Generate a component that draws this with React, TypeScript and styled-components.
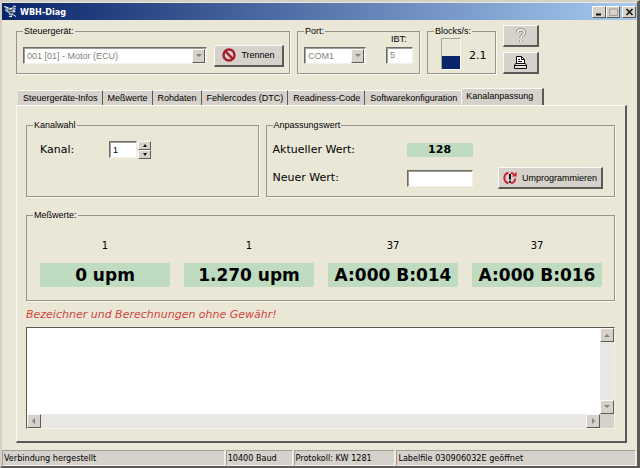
import React from "react";
import styled, { createGlobalStyle } from "styled-components";

const ui = `"Liberation Sans", Arial, sans-serif`;
const wide = `"DejaVu Sans", Verdana, sans-serif`;
const condensed = `"DejaVu Sans Condensed", "DejaVu Sans", sans-serif`;

const Global = createGlobalStyle`
  * { box-sizing: border-box; }
  html, body, #root { height: 100%; }
  body { margin: 0; font: 9px/14px ${ui}; color: #000; background: #ebe7d7; }
  button, input, select, textarea { font: inherit; color: inherit; margin: 0; border-radius: 0; }
  fieldset { min-width: 0; margin: 0; }
`;

const Frame = styled.div`
  min-height: 100%;
  display: flex;
  flex-direction: column;
  background: #ebe7d7;
  border: 2px solid;
  border-color: #d4d0c8 #5c5a56 #5c5a56 #d4d0c8;
  border-right-width: 3px;
`;

const TitleBar = styled.header`
  display: flex;
  align-items: center;
  gap: 3px;
  height: 17px;
  margin-top: 1px;
  padding: 0 1px 0 2px;
  background: linear-gradient(90deg, #0a246a, #a6caf0);
`;

const Title = styled.h1`
  flex: 1;
  margin: 0;
  font: bold 9px/14px ${condensed};
  color: #fff;
`;

const WindowButtons = styled.div`
  display: flex;
`;

const raised = `
  background: #d6d1ca;
  border: 1px solid;
  border-color: #fbfaf6 #5c5a56 #5c5a56 #fbfaf6;
`;

const CaptionButton = styled.button<{ $apart?: boolean }>`
  ${raised}
  width: 14px;
  height: 12px;
  margin-left: ${(p) => (p.$apart ? 2 : 0)}px;
  padding: 0;
  display: grid;
  place-items: center;
`;

const Content = styled.main`
  flex: 1;
  display: flex;
  flex-direction: column;
  padding: 4px 10px 7px 14px;
`;

const TopRow = styled.div`
  display: grid;
  grid-template-columns: minmax(0, 274fr) minmax(0, 123fr) minmax(0, 69fr) 36px;
  align-items: end;
  gap: 7px;
  padding-right: 88px;
`;

const Group = styled.fieldset`
  padding: 0 5px 0 6px;
  border: 1px solid #96948c;
  box-shadow: 1px 1px 0 #faf8ef;
`;

const Legend = styled.legend`
  padding: 0 1px;
`;

const Line = styled.div<{ $gap?: number; $height: number; $indent?: number; $top?: boolean }>`
  display: flex;
  align-items: ${(p) => (p.$top ? "flex-start" : "center")};
  gap: ${(p) => p.$gap ?? 0}px;
  height: ${(p) => p.$height}px;
  padding-left: ${(p) => p.$indent ?? 0}px;
`;

const sunken = `
  background: #fff;
  border: 1px solid;
  border-color: #6e6c68 #f4f2e8 #f4f2e8 #6e6c68;
  box-shadow: inset 1px 1px 0 #a09e98;
`;

const SelectFrame = styled.div<{ $grow?: boolean }>`
  ${sunken}
  display: flex;
  align-items: center;
  height: 17px;
  padding: 1px;
  flex: ${(p) => (p.$grow ? "1" : "none")};
  width: ${(p) => (p.$grow ? "auto" : "62px")};
`;

const Select = styled.select`
  appearance: none;
  flex: 1;
  min-width: 0;
  border: 0;
  padding: 0 2px;
  background: transparent;
  &:disabled { color: #85837e; opacity: 1; }
`;

const Arrow = styled.span`
  ${raised}
  display: grid;
  place-items: center;
  width: 13px;
  height: 14px;
`;

const PushButton = styled.button<{ $end?: boolean }>`
  ${raised}
  border-right-width: 2px;
  border-bottom-width: 2px;
  display: flex;
  align-items: center;
  justify-content: center;
  gap: 5px;
  height: 22px;
  min-width: 70px;
  padding: 0 4px;
  margin-left: ${(p) => (p.$end ? "auto" : "0")};
  margin-right: ${(p) => (p.$end ? "6px" : "0")};
  white-space: nowrap;
`;

const SideButtons = styled.div`
  display: flex;
  flex-direction: column;
  gap: 5px;
`;

const ToolButton = styled(PushButton)`
  min-width: 0;
  padding: 0;
`;

const TextBox = styled.input<{ $w: number }>`
  ${sunken}
  width: ${(p) => p.$w}px;
  height: 17px;
  padding: 0 3px;
  &:disabled { color: #85837e; }
`;

const Stack = styled.label`
  display: flex;
  flex-direction: column;
  gap: 3px;
  margin-bottom: 14px;
  line-height: 10px;
`;

const StackText = styled.span`
  padding-left: 5px;
`;

const Meter = styled.div`
  display: flex;
  align-items: flex-end;
  width: 20px;
  height: 32px;
  border: 1px solid;
  border-color: #a8a69c #faf8ef #faf8ef #a8a69c;
`;

const MeterFill = styled.div`
  width: 100%;
  background: #0a246a;
`;

const Reading = styled.span`
  align-self: center;
  font: 11px/14px ${wide};
`;

const Tabs = styled.div`
  display: flex;
  align-items: flex-end;
  height: 17px;
  margin-top: 14px;
  padding-left: 2px;
`;

const Tab = styled.button`
  height: 15px;
  padding: 0 4px 0 5px;
  background: #d6d1ca;
  border: 0 solid #5c5a56;
  border-top: 1px solid #fbfaf6;
  border-right: 1px solid #5c5a56;
  white-space: nowrap;
  &:nth-last-child(2) { border-right-color: #fbfaf6; }
  &[aria-selected="true"] {
    height: 17px;
    padding: 0 9px 2px 4px;
    border-right-width: 2px;
  }
`;

const Panel = styled.section`
  flex: 1;
  display: flex;
  flex-direction: column;
  border: 1px solid;
  border-color: #fbfaf6 #5c5a56 #5c5a56 #fbfaf6;
  border-right-width: 2px;
  border-bottom-width: 2px;
  padding: 12px 10px 12px 9px;
`;

const Row = styled.div`
  display: grid;
  grid-template-columns: minmax(0, 233fr) minmax(0, 350fr);
  gap: 7px;
  margin-bottom: 11px;
`;

const FieldLabel = styled.label<{ $w: number }>`
  width: ${(p) => p.$w}px;
  font: 11px/14px ${wide};
`;

const Spinner = styled.div`
  display: flex;
  flex-direction: column;
  margin-left: 1px;
`;

const SpinButton = styled.button`
  ${raised}
  width: 13px;
  height: 9px;
  padding: 0;
  display: grid;
  place-items: center;
`;

const CurrentValue = styled.output`
  width: 66px;
  background: #c0dcc0;
  text-align: center;
  font: bold 11px/14px ${wide};
`;

const Readings = styled.div`
  display: grid;
  grid-template-columns: repeat(4, 1fr);
  gap: 14px;
  padding: 17px 7px 13px;
`;

const Cell = styled.div`
  display: flex;
  flex-direction: column;
  gap: 10px;
  text-align: center;
  font: 10px/14px ${wide};
`;

const Value = styled.output`
  background: #c0dcc0;
  font: bold 17px/24px ${wide};
  white-space: nowrap;
`;

const Notice = styled.p`
  margin: 7px 0 5px;
  font: italic 11px/14px ${wide};
  color: #d0453c;
`;

const LogFrame = styled.div`
  flex: 1;
  display: grid;
  grid-template: 1fr 14px / 1fr 14px;
  min-height: 60px;
  border: 1px solid;
  border-color: #5c5a56 #f4f2e8 #f4f2e8 #5c5a56;
  background: #d6d1ca;
`;

const Log = styled.textarea`
  resize: none;
  border: 0;
  padding: 2px;
  width: 100%;
  height: 100%;
  background: #fff;
  overflow: hidden;
  outline: none;
`;

const Scroll = styled.div<{ $vertical?: boolean }>`
  display: flex;
  flex-direction: ${(p) => (p.$vertical ? "column" : "row")};
  justify-content: space-between;
  background: #e9e7e4;
`;

const ScrollButton = styled.button`
  ${raised}
  width: 14px;
  height: 14px;
  padding: 0;
  display: grid;
  place-items: center;
`;

const StatusBar = styled.footer`
  display: grid;
  grid-template-columns: 223fr 67fr 102fr 240fr;
  gap: 1px;
  padding-right: 1px;
`;

const StatusPane = styled.span`
  padding-left: 1px;
  background: #d6d1ca;
  border: 1px solid;
  border-color: #a09e98 #f4f2e8 #f4f2e8 #a09e98;
  font: 9px/14px ${condensed};
  white-space: nowrap;
`;

const Triangle = ({ dir, color = "#85837e" }: { dir: "up" | "down" | "left" | "right"; color?: string }) => {
  const points = {
    up: "0,5 3,2 6,5",
    down: "0,1 6,1 3,4",
    left: "4,0 4,6 1,3",
    right: "2,0 5,3 2,6",
  }[dir];
  return (
    <svg width="6" height="6" viewBox="0 0 6 6" aria-hidden="true">
      <polygon points={points} fill={color} />
    </svg>
  );
};

const SpinMark = ({ up }: { up?: boolean }) => (
  <svg width="4" height="3" viewBox="0 0 4 3" aria-hidden="true">
    <polygon points={up ? "0,3 2,0 4,3" : "0,0 4,0 2,3"} fill="#111" />
  </svg>
);

const AppIcon = () => (
  <svg width="13" height="13" viewBox="0 0 13 13" aria-hidden="true">
    <path d="M1 2l3 0 2 1 3-1 3 1-1 3 1 1-3 1-1 3-3-1-1-3-2-2z" fill="#8fa3bd" />
    <path d="M0 1.500l4 1M9 1l3 .5M1 5l3 2M8 9l4 2.500M5 11.500h3" stroke="#e8eef4" fill="none" />
    <path d="M4 5l2 1 3-2M6 8l3-1" stroke="#26334f" fill="none" />
    <path d="M6 3.500h2M9 6h2" stroke="#fff" fill="none" />
  </svg>
);

const StopIcon = () => (
  <svg width="14" height="14" viewBox="0 0 14 14" aria-hidden="true">
    <circle cx="7" cy="7" r="5.500" fill="none" stroke="#a5202a" strokeWidth="2.400" />
    <path d="M3.200 3.200l7.600 7.600" stroke="#a5202a" strokeWidth="2.400" />
  </svg>
);

const ProgramIcon = () => (
  <svg width="14" height="14" viewBox="0 0 14 14" aria-hidden="true">
    <path
      d="M5.500 1.800A5.400 5.400 0 0 0 5.500 12.300M8 12.300A5.400 5.400 0 0 0 12.200 7.500M8 1.800a5.400 5.400 0 0 1 2.800 1.600"
      fill="none"
      stroke="#d0202c"
      strokeWidth="2"
    />
    <path d="M8.800 5.600h4.800V.8z" fill="#d0202c" />
    <path d="M7 3v5.500M7 9.800v2" stroke="#111" strokeWidth="2" />
  </svg>
);

const hook = "M2.500 5C2.500 .8 9.500 .8 9.500 4.500c0 2.500-3.500 2.700-3.500 5.500M6 12v2";

const HelpIcon = () => (
  <svg width="12" height="16" viewBox="0 0 12 16" aria-hidden="true">
    <path d={hook} fill="none" stroke="#85837e" strokeWidth="3.200" />
    <path d={hook} fill="none" stroke="#fbfaf6" strokeWidth="1.600" />
  </svg>
);

const PrintIcon = () => (
  <svg width="15" height="15" viewBox="0 0 15 15" aria-hidden="true">
    <path d="M3.500 8.500v-7h5l3 3v4" fill="#fff" stroke="#111" />
    <path d="M8.500 1.500v3h3M5 4.500h2M5 6.500h4" fill="none" stroke="#111" />
    <path d="M2.500 8.500h10l1 2v3h-12v-3z" fill="#e8e6e0" stroke="#111" />
    <path d="M1 10.500h13" stroke="#111" />
  </svg>
);

const tabs = [
  "Steuergeräte-Infos",
  "Meßwerte",
  "Rohdaten",
  "Fehlercodes (DTC)",
  "Readiness-Code",
  "Softwarekonfiguration",
  "Kanalanpassung",
];
const activeTab = "Kanalanpassung";

const readings = [
  { label: "1", value: "0 upm" },
  { label: "1", value: "1.270 upm" },
  { label: "37", value: "A:000 B:014" },
  { label: "37", value: "A:000 B:016" },
];

const status = ["Verbindung hergestellt", "10400 Baud", "Protokoll: KW 1281", "Labelfile 030906032E geöffnet"];

const blockRate = 2.1;
const maxBlockRate = 5;

export default function App() {
  return (
    <>
      <Global />
      <Frame>
        <TitleBar>
          <AppIcon />
          <Title>WBH-Diag</Title>
          <WindowButtons>
            <CaptionButton aria-label="Minimieren">
              <svg width="9" height="8"><path d="M1 6.500h5" stroke="#111" strokeWidth="2" /></svg>
            </CaptionButton>
            <CaptionButton aria-label="Maximieren">
              <svg width="9" height="8"><path d="M.5 1h8v6.500h-8z" stroke="#a09e98" fill="none" /></svg>
            </CaptionButton>
            <CaptionButton aria-label="Schließen" $apart>
              <svg width="9" height="8"><path d="M1.500 1l6 6M7.500 1l-6 6" stroke="#111" strokeWidth="1.600" /></svg>
            </CaptionButton>
          </WindowButtons>
        </TitleBar>

        <Content>
          <TopRow>
            <Group>
              <Legend>Steuergerät:</Legend>
              <Line $gap={7} $height={35}>
                <SelectFrame $grow>
                  <Select disabled aria-label="Steuergerät">
                    <option>001 [01] - Motor (ECU)</option>
                  </Select>
                  <Arrow><Triangle dir="down" /></Arrow>
                </SelectFrame>
                <PushButton><StopIcon />Trennen</PushButton>
              </Line>
            </Group>
            <Group>
              <Legend>Port:</Legend>
              <Line $gap={20} $height={35}>
                <SelectFrame>
                  <Select disabled aria-label="Port"><option>COM1</option></Select>
                  <Arrow><Triangle dir="down" /></Arrow>
                </SelectFrame>
                <Stack>
                  <StackText>IBT:</StackText>
                  <TextBox $w={27} disabled defaultValue="5" />
                </Stack>
              </Line>
            </Group>
            <Group>
              <Legend>Blocks/s:</Legend>
              <Line $gap={8} $height={35} $indent={7} $top>
                <Meter role="meter" aria-label="Blocks/s" aria-valuenow={blockRate} aria-valuemax={maxBlockRate}>
                  <MeterFill style={{ height: `${(blockRate / maxBlockRate) * 100}%` }} />
                </Meter>
                <Reading>{blockRate}</Reading>
              </Line>
            </Group>
            <SideButtons>
              <ToolButton aria-label="Hilfe" disabled><HelpIcon /></ToolButton>
              <ToolButton aria-label="Drucken"><PrintIcon /></ToolButton>
            </SideButtons>
          </TopRow>

          <Tabs role="tablist">
            {tabs.map((t) => (
              <Tab key={t} role="tab" aria-selected={t === activeTab}>{t}</Tab>
            ))}
          </Tabs>

          <Panel role="tabpanel">
            <Row>
              <Group>
                <Legend>Kanalwahl</Legend>
                <Line $height={35} $indent={7}>
                  <FieldLabel htmlFor="kanal" $w={69}>Kanal:</FieldLabel>
                  <TextBox id="kanal" $w={28} defaultValue="1" />
                  <Spinner>
                    <SpinButton aria-label="Mehr"><SpinMark up /></SpinButton>
                    <SpinButton aria-label="Weniger"><SpinMark /></SpinButton>
                  </Spinner>
                </Line>
              </Group>
              <Group>
                <Legend>Anpassungswert</Legend>
                <Line $height={35}>
                  <FieldLabel htmlFor="aktuell" $w={134}>Aktueller Wert:</FieldLabel>
                  <CurrentValue id="aktuell">128</CurrentValue>
                </Line>
                <Line $height={22}>
                  <FieldLabel htmlFor="neu" $w={134}>Neuer Wert:</FieldLabel>
                  <TextBox id="neu" $w={66} />
                  <PushButton $end><ProgramIcon />Umprogrammieren</PushButton>
                </Line>
                <Line $height={7} />
              </Group>
            </Row>
            <Group>
              <Legend>Meßwerte:</Legend>
              <Readings>
                {readings.map((r, i) => (
                  <Cell key={i}><span>{r.label}</span><Value>{r.value}</Value></Cell>
                ))}
              </Readings>
            </Group>
            <Notice>Bezeichner und Berechnungen ohne Gewähr!</Notice>
            <LogFrame>
              <Log aria-label="Protokoll" readOnly />
              <Scroll $vertical>
                <ScrollButton aria-label="Nach oben"><Triangle dir="up" /></ScrollButton>
                <ScrollButton aria-label="Nach unten"><Triangle dir="down" /></ScrollButton>
              </Scroll>
              <Scroll>
                <ScrollButton aria-label="Nach links"><Triangle dir="left" /></ScrollButton>
                <ScrollButton aria-label="Nach rechts"><Triangle dir="right" /></ScrollButton>
              </Scroll>
            </LogFrame>
          </Panel>
        </Content>

        <StatusBar>
          {status.map((s) => <StatusPane key={s}>{s}</StatusPane>)}
        </StatusBar>
      </Frame>
    </>
  );
}
